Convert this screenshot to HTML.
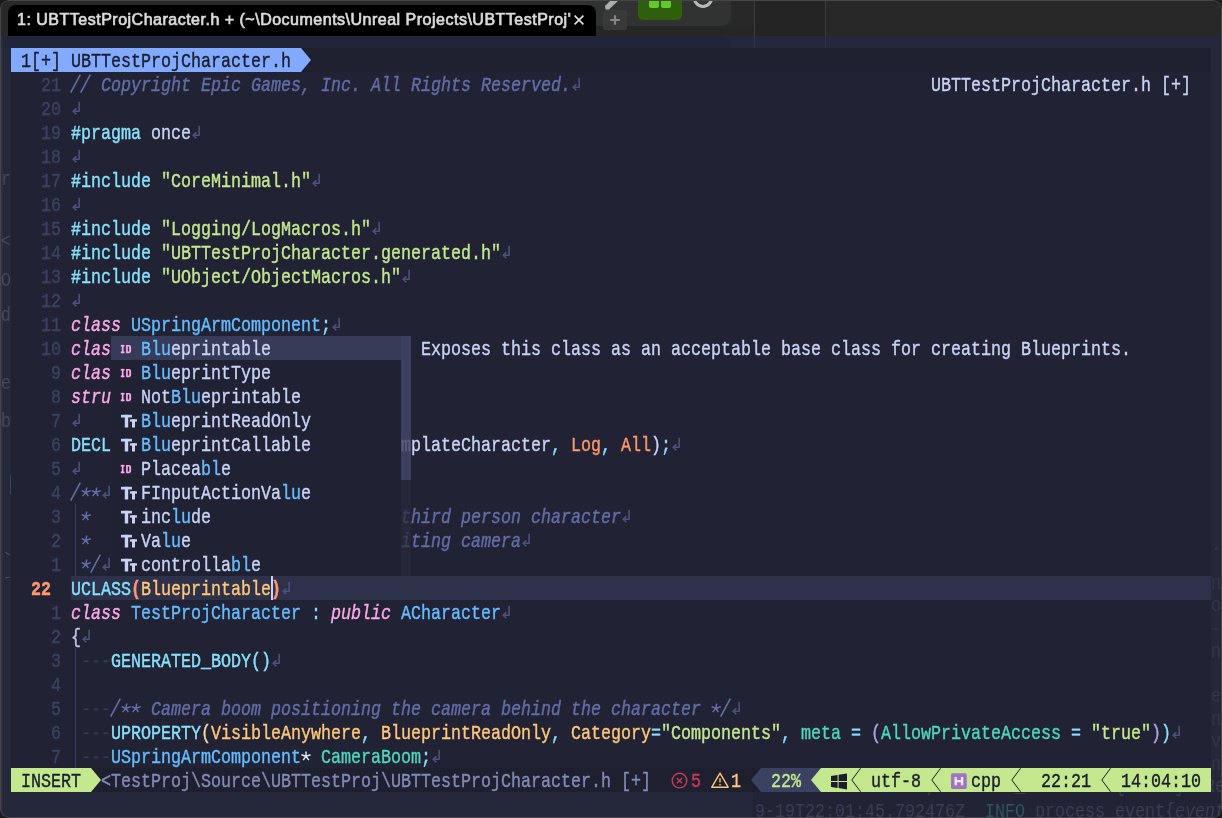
<!DOCTYPE html>
<html><head><meta charset="utf-8"><title>nvim</title><style>
html,body{margin:0;padding:0}
body{width:1222px;height:818px;background:#1b1b1b;overflow:hidden;position:relative;font-family:"Liberation Sans",sans-serif}
#win{position:absolute;left:0;top:0;width:1222px;height:818px;border-radius:9px;overflow:hidden;background:#282828}
#bord{position:absolute;left:0;top:0;width:1220px;height:816px;border-radius:9px;border:1px solid #464646;pointer-events:none}
#term{position:absolute;left:0;top:36px;width:1222px;height:782px;background:#25283a;overflow:hidden}
#grid{position:absolute;left:11px;top:12px;width:1200px;height:744px;background:#212335;overflow:hidden}
.t{position:absolute;white-space:pre;font:21.0px/24px "Liberation Mono",monospace;transform:scaleX(0.79352);transform-origin:0 0;height:24px;padding-top:2.2px;box-sizing:border-box;-webkit-text-stroke:0.42px currentColor}
.t.it{font-style:italic}
.t.b{font-weight:bold}
.i{position:absolute;overflow:visible}
#txt{position:absolute;left:0;top:0;width:1200px;height:744px;will-change:transform}
#tab{position:absolute;left:8px;top:5px;width:588px;height:31px;background:#000;border-radius:8px 8px 0 0}
#tabt{position:absolute;left:8.5px;top:0;height:31px;font:16px/30px "Liberation Sans",sans-serif;color:#dadada;white-space:pre;letter-spacing:0.5px;-webkit-text-stroke:0.7px currentColor;will-change:transform}
#plus{position:absolute;left:603px;top:10px;width:24px;height:20px;background:#393939;border-radius:2px}
.g{position:absolute;white-space:pre;font:21.0px/24px "Liberation Mono",monospace;transform:scaleX(0.79352);transform-origin:0 0;height:24px;padding-top:2.2px;box-sizing:border-box;color:#3a3e56;will-change:transform}
.ghost{position:absolute;white-space:pre;font:21.0px/24px "Liberation Mono",monospace;transform:scaleX(0.79352);transform-origin:0 0;color:#3c4058}
</style></head>
<body>
<div id="win">
<div style="position:absolute;left:560px;top:-10px;width:171px;height:36px;background:#313232;border-radius:9px"></div>
<div style="position:absolute;left:596px;top:26px;width:158px;height:10px;background:#252727"></div>
<div style="position:absolute;left:638px;top:-6px;width:44px;height:26px;background:#2f5f0c;border-radius:5px"></div>
<div style="position:absolute;left:649px;top:-4px;width:10px;height:12px;background:#63c926;border-radius:2px"></div>
<div style="position:absolute;left:661px;top:-4px;width:10px;height:12px;background:#63c926;border-radius:2px"></div>
<div style="position:absolute;left:692px;top:-18px;width:16px;height:20px;border:3.5px solid #b9b9b9;border-radius:50%"></div>
<svg class="i" style="left:603px;top:0" width="22" height="10" viewBox="0 0 22 10"><path d="M2.5 9.5L2 6L9 -1H17L6 9.5Z" fill="#a9aeb6"/></svg>
<div style="position:absolute;left:754px;top:0;width:1px;height:36px;background:#3c3c3c"></div>
<div style="position:absolute;left:825px;top:0;width:1px;height:36px;background:#3c3c3c"></div>
<div style="position:absolute;left:755px;top:1px;width:70px;height:35px;background:#242424"></div>

<div id="tab"><div id="tabt">1: UBTTestProjCharacter.h + (~\Documents\Unreal Projects\UBTTestProj'</div>
<svg class="i" style="left:566.4px;top:10.2px" width="10" height="10" viewBox="0 0 10 10"><path d="M0.6 0.6L9.4 9.4M9.4 0.6L0.6 9.4" stroke="#e2e2e2" stroke-width="1.6" fill="none"/></svg></div>
<div id="plus"><svg class="i" style="left:7px;top:5px" width="10" height="10" viewBox="0 0 10 10"><path d="M5 0.2V9.8M0.2 5H9.8" stroke="#868686" stroke-width="2.2" fill="none"/></svg></div>
<div id="term">
<div style="position:absolute;left:753px;top:756px;width:469px;height:26px;background:rgba(10,10,20,0.10)"></div>
<span class="g" style="left:755px;top:762px">9-19T22:01:45.792476Z  <span style="color:#2d5561">INFO</span> process_event{<i>event_id</i></span>
<span class="g" style="left:755px;top:737px">.nd 'mind' 1857ZU; 'CUSTOM_Container{idx 3}: Reme</span>
<span class="g" style="left:1211px;top:534px;color:#33374d">n</span>
<span class="g" style="left:1211px;top:556px;color:#33374d">o</span>
<span class="g" style="left:1211px;top:580px;color:#33374d">-f</span>
<span class="g" style="left:1211px;top:602px;color:#33374d">n</span>
<span class="g" style="left:1211px;top:647px;color:#33374d">e</span>
<span class="g" style="left:1211px;top:670px;color:#33374d">n</span>
<span class="g" style="left:1211px;top:692px;color:#33374d">v</span>
<span class="g" style="left:1211px;top:715px;color:#33374d">n</span>
<span class="g" style="left:1211px;top:495px;color:#33374d">.c</span>
<span class="g" style="left:-9px;top:130px;color:#45485c">cr</span>
<span class="g" style="left:-9px;top:192px;color:#45485c">&lt;&lt;</span>
<span class="g" style="left:-9px;top:231px;color:#45485c">OO</span>
<span class="g" style="left:-9px;top:266px;color:#45485c">od'</span>
<span class="g" style="left:-9px;top:334px;color:#45485c">re</span>
<span class="g" style="left:-9px;top:372px;color:#45485c">ab</span>
<div style="position:absolute;left:9.5px;top:439px;width:1.2px;height:19px;background:#2d4a63"></div>
<div style="position:absolute;left:5px;top:517px;width:5px;height:1.2px;background:#4b4e62;transform:rotate(30deg)"></div>
<div style="position:absolute;left:5px;top:541px;width:5px;height:1.2px;background:#4b4e62;transform:rotate(-10deg)"></div>
<div style="position:absolute;left:0;top:0;width:3px;height:782px;background:rgba(120,120,110,0.10)"></div>
<div style="position:absolute;left:0;top:0;width:731px;height:12px;background:rgba(0,0,10,0.06);border-radius:0 9px 0 0"></div>
<div style="position:absolute;left:754px;top:0;width:1px;height:12px;background:#30334a"></div>
<div style="position:absolute;left:825px;top:0;width:1px;height:12px;background:#30334a"></div>

<div id="grid">
<div style="position:absolute;left:0px;top:0px;width:1200px;height:24px;background:#1e2030;"></div>
<div style="position:absolute;left:0px;top:0px;width:290px;height:24px;background:#82aaff;"></div>
<svg class="i" style="left:290px;top:0" width="10" height="24" viewBox="0 0 10 24"><path d="M0 0L10 12L0 24Z" fill="#82aaff"/></svg>
<div style="position:absolute;left:60px;top:528px;width:1140px;height:24px;background:#2d314a;"></div>
<div style="position:absolute;left:100px;top:288px;width:300px;height:240px;background:#202234;"></div>
<div style="position:absolute;left:100px;top:288px;width:300px;height:24px;background:#363b57;"></div>
<div style="position:absolute;left:390px;top:288px;width:10px;height:144px;background:#3b4060;"></div>
<div style="position:absolute;left:390px;top:432px;width:10px;height:96px;background:#26283a;"></div>
<div style="position:absolute;left:260.2px;top:528px;width:1.8px;height:24px;background:#c8d3f5;"></div>
<div style="position:absolute;left:64.1px;top:456px;width:1.1px;height:72px;background:#3a4062;"></div>
<div style="position:absolute;left:64.1px;top:600px;width:1.1px;height:120px;background:#3a4062;"></div>
<div style="position:absolute;left:0px;top:720px;width:1200px;height:24px;background:#1e2030;"></div>
<div style="position:absolute;left:0px;top:720px;width:80px;height:24px;background:#c3e88d;"></div>
<svg class="i" style="left:80px;top:720px" width="10" height="24" viewBox="0 0 10 24"><path d="M0 0L10 12L0 24Z" fill="#c3e88d"/></svg>
<svg class="i" style="left:659px;top:720px" width="20" height="24" viewBox="0 0 20 24"><g fill="none" stroke="#c53b53" stroke-width="1.4"><circle cx="9.5" cy="12.6" r="7.3"/><path d="M6.9 10L12.1 15.2M12.1 10L6.9 15.2"/></g></svg>
<svg class="i" style="left:699px;top:720px" width="22" height="24" viewBox="0 0 22 24"><g fill="none" stroke="#ffc777" stroke-width="1.4" stroke-linejoin="round"><path d="M10 5.2L18.2 19.2H1.8Z"/><path d="M10 10.2V14.6M10 16V17.6"/></g></svg>
<svg class="i" style="left:740px;top:720px" width="10" height="24" viewBox="0 0 10 24"><path d="M10 0L0 12L10 24Z" fill="#3b4261"/></svg>
<div style="position:absolute;left:750px;top:720px;width:60px;height:24px;background:#3b4261;"></div>
<svg class="i" style="left:800px;top:720px" width="10" height="24" viewBox="0 0 10 24"><path d="M10 0L0 12L10 24Z" fill="#c3e88d"/></svg>
<div style="position:absolute;left:810px;top:720px;width:390px;height:24px;background:#c3e88d;"></div>
<svg class="i" style="left:820px;top:720px" width="17" height="24" viewBox="0 0 17 24"><path transform="translate(0 1.3)" d="M0 6.6L6.6 5.6V11.6H0ZM7.6 5.4L16 4.1V11.6H7.6ZM0 12.6H6.6V18.6L0 17.6ZM7.6 12.6H16V20.1L7.6 18.8Z" fill="#1b1d2b"/></svg>
<svg class="i" style="left:840px;top:720px" width="10" height="24" viewBox="0 0 10 24"><path d="M9.6 0.3L0.8 12L9.6 23.7" fill="none" stroke="#1b1d2b" stroke-width="1.0"/></svg>
<svg class="i" style="left:920px;top:720px" width="10" height="24" viewBox="0 0 10 24"><path d="M9.6 0.3L0.8 12L9.6 23.7" fill="none" stroke="#1b1d2b" stroke-width="1.0"/></svg>
<svg class="i" style="left:940px;top:720px" width="16" height="24" viewBox="0 0 16 24"><rect x="0" y="5.2" width="15.8" height="15.8" rx="1.8" fill="#a074c4"/><path d="M4.7 8.9V17.3M11.1 8.9V17.3M4.7 13.1H11.1" stroke="#efe8f8" stroke-width="2.3" fill="none"/></svg>
<svg class="i" style="left:1000px;top:720px" width="10" height="24" viewBox="0 0 10 24"><path d="M9.6 0.3L0.8 12L9.6 23.7" fill="none" stroke="#1b1d2b" stroke-width="1.0"/></svg>
<svg class="i" style="left:1090px;top:720px" width="10" height="24" viewBox="0 0 10 24"><path d="M9.6 0.3L0.8 12L9.6 23.7" fill="none" stroke="#1b1d2b" stroke-width="1.0"/></svg>
<div id="txt">
<span class="t " style="left:30px;top:24px;color:#3b4261">21</span>
<svg class="i" style="left:60px;top:24px" width="10" height="24" viewBox="0 0 10 24"><path d="M-0.3 20.6L9.3 2.6" fill="none" stroke="#636da6" stroke-width="1.6"/></svg>
<svg class="i" style="left:70px;top:24px" width="10" height="24" viewBox="0 0 10 24"><path d="M-0.3 20.6L9.3 2.6" fill="none" stroke="#636da6" stroke-width="1.6"/></svg>
<span class="t it" style="left:60px;top:24px;color:#636da6">   Copyright Epic Games, Inc. All Rights Reserved.</span>
<svg class="i" style="left:560px;top:24px" width="10" height="24" viewBox="0 0 10 24"><path d="M8.1 5.7V15.3H2.4M5.3 12.4L2.2 15.3L5.3 18.3" fill="none" stroke="#4b5179" stroke-width="1.6"/></svg>
<span class="t " style="left:30px;top:48px;color:#3b4261">20</span>
<svg class="i" style="left:60px;top:48px" width="10" height="24" viewBox="0 0 10 24"><path d="M8.1 5.7V15.3H2.4M5.3 12.4L2.2 15.3L5.3 18.3" fill="none" stroke="#4b5179" stroke-width="1.6"/></svg>
<span class="t " style="left:30px;top:72px;color:#3b4261">19</span>
<span class="t " style="left:60px;top:72px;color:#86e1fc">#pragma</span>
<span class="t " style="left:140px;top:72px;color:#c8d3f5">once</span>
<svg class="i" style="left:180px;top:72px" width="10" height="24" viewBox="0 0 10 24"><path d="M8.1 5.7V15.3H2.4M5.3 12.4L2.2 15.3L5.3 18.3" fill="none" stroke="#4b5179" stroke-width="1.6"/></svg>
<span class="t " style="left:30px;top:96px;color:#3b4261">18</span>
<svg class="i" style="left:60px;top:96px" width="10" height="24" viewBox="0 0 10 24"><path d="M8.1 5.7V15.3H2.4M5.3 12.4L2.2 15.3L5.3 18.3" fill="none" stroke="#4b5179" stroke-width="1.6"/></svg>
<span class="t " style="left:30px;top:120px;color:#3b4261">17</span>
<span class="t " style="left:60px;top:120px;color:#86e1fc">#include</span>
<span class="t " style="left:150px;top:120px;color:#c3e88d">&quot;CoreMinimal.h&quot;</span>
<svg class="i" style="left:300px;top:120px" width="10" height="24" viewBox="0 0 10 24"><path d="M8.1 5.7V15.3H2.4M5.3 12.4L2.2 15.3L5.3 18.3" fill="none" stroke="#4b5179" stroke-width="1.6"/></svg>
<span class="t " style="left:30px;top:144px;color:#3b4261">16</span>
<svg class="i" style="left:60px;top:144px" width="10" height="24" viewBox="0 0 10 24"><path d="M8.1 5.7V15.3H2.4M5.3 12.4L2.2 15.3L5.3 18.3" fill="none" stroke="#4b5179" stroke-width="1.6"/></svg>
<span class="t " style="left:30px;top:168px;color:#3b4261">15</span>
<span class="t " style="left:60px;top:168px;color:#86e1fc">#include</span>
<span class="t " style="left:150px;top:168px;color:#c3e88d">&quot;Logging/LogMacros.h&quot;</span>
<svg class="i" style="left:360px;top:168px" width="10" height="24" viewBox="0 0 10 24"><path d="M8.1 5.7V15.3H2.4M5.3 12.4L2.2 15.3L5.3 18.3" fill="none" stroke="#4b5179" stroke-width="1.6"/></svg>
<span class="t " style="left:30px;top:192px;color:#3b4261">14</span>
<span class="t " style="left:60px;top:192px;color:#86e1fc">#include</span>
<span class="t " style="left:150px;top:192px;color:#c3e88d">&quot;UBTTestProjCharacter.generated.h&quot;</span>
<svg class="i" style="left:490px;top:192px" width="10" height="24" viewBox="0 0 10 24"><path d="M8.1 5.7V15.3H2.4M5.3 12.4L2.2 15.3L5.3 18.3" fill="none" stroke="#4b5179" stroke-width="1.6"/></svg>
<span class="t " style="left:30px;top:216px;color:#3b4261">13</span>
<span class="t " style="left:60px;top:216px;color:#86e1fc">#include</span>
<span class="t " style="left:150px;top:216px;color:#c3e88d">&quot;UObject/ObjectMacros.h&quot;</span>
<svg class="i" style="left:390px;top:216px" width="10" height="24" viewBox="0 0 10 24"><path d="M8.1 5.7V15.3H2.4M5.3 12.4L2.2 15.3L5.3 18.3" fill="none" stroke="#4b5179" stroke-width="1.6"/></svg>
<span class="t " style="left:30px;top:240px;color:#3b4261">12</span>
<svg class="i" style="left:60px;top:240px" width="10" height="24" viewBox="0 0 10 24"><path d="M8.1 5.7V15.3H2.4M5.3 12.4L2.2 15.3L5.3 18.3" fill="none" stroke="#4b5179" stroke-width="1.6"/></svg>
<span class="t " style="left:30px;top:264px;color:#3b4261">11</span>
<span class="t it" style="left:60px;top:264px;color:#fca7ea">class</span>
<span class="t " style="left:120px;top:264px;color:#65bcff">USpringArmComponent</span>
<span class="t " style="left:310px;top:264px;color:#89ddff">;</span>
<svg class="i" style="left:320px;top:264px" width="10" height="24" viewBox="0 0 10 24"><path d="M8.1 5.7V15.3H2.4M5.3 12.4L2.2 15.3L5.3 18.3" fill="none" stroke="#4b5179" stroke-width="1.6"/></svg>
<span class="t " style="left:30px;top:288px;color:#3b4261">10</span>
<span class="t it" style="left:60px;top:288px;color:#fca7ea">clas</span>
<span class="t " style="left:40px;top:312px;color:#3b4261">9</span>
<span class="t it" style="left:60px;top:312px;color:#fca7ea">clas</span>
<span class="t " style="left:40px;top:336px;color:#3b4261">8</span>
<span class="t it" style="left:60px;top:336px;color:#fca7ea">stru</span>
<span class="t " style="left:40px;top:360px;color:#3b4261">7</span>
<svg class="i" style="left:60px;top:360px" width="10" height="24" viewBox="0 0 10 24"><path d="M8.1 5.7V15.3H2.4M5.3 12.4L2.2 15.3L5.3 18.3" fill="none" stroke="#4b5179" stroke-width="1.6"/></svg>
<span class="t " style="left:40px;top:384px;color:#3b4261">6</span>
<span class="t " style="left:60px;top:384px;color:#86e1fc">DECL</span>
<span class="t " style="left:40px;top:408px;color:#3b4261">5</span>
<svg class="i" style="left:60px;top:408px" width="10" height="24" viewBox="0 0 10 24"><path d="M8.1 5.7V15.3H2.4M5.3 12.4L2.2 15.3L5.3 18.3" fill="none" stroke="#4b5179" stroke-width="1.6"/></svg>
<span class="t " style="left:40px;top:432px;color:#3b4261">4</span>
<svg class="i" style="left:60px;top:432px" width="10" height="24" viewBox="0 0 10 24"><path d="M-0.3 20.6L9.3 2.6" fill="none" stroke="#636da6" stroke-width="1.6"/></svg>
<svg class="i" style="left:70px;top:432px" width="10" height="24" viewBox="0 0 10 24"><path d="M5.00 12.20L5.00 7.40M5.00 12.20L9.57 10.72M5.00 12.20L7.82 16.08M5.00 12.20L2.18 16.08M5.00 12.20L0.43 10.72" fill="none" stroke="#636da6" stroke-width="1.5" transform="skewX(-8) translate(1.7 0)"/></svg>
<svg class="i" style="left:80px;top:432px" width="10" height="24" viewBox="0 0 10 24"><path d="M5.00 12.20L5.00 7.40M5.00 12.20L9.57 10.72M5.00 12.20L7.82 16.08M5.00 12.20L2.18 16.08M5.00 12.20L0.43 10.72" fill="none" stroke="#636da6" stroke-width="1.5" transform="skewX(-8) translate(1.7 0)"/></svg>
<svg class="i" style="left:90px;top:432px" width="10" height="24" viewBox="0 0 10 24"><path d="M8.1 5.7V15.3H2.4M5.3 12.4L2.2 15.3L5.3 18.3" fill="none" stroke="#4b5179" stroke-width="1.6"/></svg>
<span class="t " style="left:40px;top:456px;color:#3b4261">3</span>
<svg class="i" style="left:70px;top:456px" width="10" height="24" viewBox="0 0 10 24"><path d="M5.00 12.20L5.00 7.40M5.00 12.20L9.57 10.72M5.00 12.20L7.82 16.08M5.00 12.20L2.18 16.08M5.00 12.20L0.43 10.72" fill="none" stroke="#636da6" stroke-width="1.5" transform="skewX(-8) translate(1.7 0)"/></svg>
<span class="t " style="left:40px;top:480px;color:#3b4261">2</span>
<svg class="i" style="left:70px;top:480px" width="10" height="24" viewBox="0 0 10 24"><path d="M5.00 12.20L5.00 7.40M5.00 12.20L9.57 10.72M5.00 12.20L7.82 16.08M5.00 12.20L2.18 16.08M5.00 12.20L0.43 10.72" fill="none" stroke="#636da6" stroke-width="1.5" transform="skewX(-8) translate(1.7 0)"/></svg>
<span class="t " style="left:40px;top:504px;color:#3b4261">1</span>
<svg class="i" style="left:70px;top:504px" width="10" height="24" viewBox="0 0 10 24"><path d="M5.00 12.20L5.00 7.40M5.00 12.20L9.57 10.72M5.00 12.20L7.82 16.08M5.00 12.20L2.18 16.08M5.00 12.20L0.43 10.72" fill="none" stroke="#636da6" stroke-width="1.5" transform="skewX(-8) translate(1.7 0)"/></svg>
<svg class="i" style="left:80px;top:504px" width="10" height="24" viewBox="0 0 10 24"><path d="M-0.3 20.6L9.3 2.6" fill="none" stroke="#636da6" stroke-width="1.6"/></svg>
<svg class="i" style="left:90px;top:504px" width="10" height="24" viewBox="0 0 10 24"><path d="M8.1 5.7V15.3H2.4M5.3 12.4L2.2 15.3L5.3 18.3" fill="none" stroke="#4b5179" stroke-width="1.6"/></svg>
<span class="t b" style="left:20px;top:528px;color:#ff966c">22</span>
<span class="t " style="left:60px;top:528px;color:#86e1fc">UCLASS</span>
<span class="t b" style="left:120px;top:528px;color:#ff966c">(</span>
<span class="t " style="left:130px;top:528px;color:#ffc777">Blueprintable</span>
<span class="t b" style="left:260px;top:528px;color:#ff966c">)</span>
<svg class="i" style="left:270px;top:528px" width="10" height="24" viewBox="0 0 10 24"><path d="M8.1 5.7V15.3H2.4M5.3 12.4L2.2 15.3L5.3 18.3" fill="none" stroke="#4b5179" stroke-width="1.6"/></svg>
<span class="t " style="left:40px;top:552px;color:#3b4261">1</span>
<span class="t it" style="left:60px;top:552px;color:#fca7ea">class</span>
<span class="t " style="left:120px;top:552px;color:#65bcff">TestProjCharacter</span>
<span class="t " style="left:300px;top:552px;color:#89ddff">:</span>
<span class="t it" style="left:320px;top:552px;color:#fca7ea">public</span>
<span class="t " style="left:390px;top:552px;color:#65bcff">ACharacter</span>
<svg class="i" style="left:490px;top:552px" width="10" height="24" viewBox="0 0 10 24"><path d="M8.1 5.7V15.3H2.4M5.3 12.4L2.2 15.3L5.3 18.3" fill="none" stroke="#4b5179" stroke-width="1.6"/></svg>
<span class="t " style="left:40px;top:576px;color:#3b4261">2</span>
<span class="t " style="left:60px;top:576px;color:#c8c0ea">{</span>
<svg class="i" style="left:70px;top:576px" width="10" height="24" viewBox="0 0 10 24"><path d="M8.1 5.7V15.3H2.4M5.3 12.4L2.2 15.3L5.3 18.3" fill="none" stroke="#4b5179" stroke-width="1.6"/></svg>
<span class="t " style="left:40px;top:600px;color:#3b4261">3</span>
<span class="t " style="left:70px;top:600px;color:#343955">---</span>
<span class="t " style="left:100px;top:600px;color:#86e1fc">GENERATED_BODY</span>
<span class="t " style="left:240px;top:600px;color:#86e1fc">()</span>
<svg class="i" style="left:260px;top:600px" width="10" height="24" viewBox="0 0 10 24"><path d="M8.1 5.7V15.3H2.4M5.3 12.4L2.2 15.3L5.3 18.3" fill="none" stroke="#4b5179" stroke-width="1.6"/></svg>
<span class="t " style="left:40px;top:624px;color:#3b4261">4</span>
<span class="t " style="left:40px;top:648px;color:#3b4261">5</span>
<span class="t " style="left:70px;top:648px;color:#343955">---</span>
<svg class="i" style="left:100px;top:648px" width="10" height="24" viewBox="0 0 10 24"><path d="M-0.3 20.6L9.3 2.6" fill="none" stroke="#636da6" stroke-width="1.6"/></svg>
<svg class="i" style="left:110px;top:648px" width="10" height="24" viewBox="0 0 10 24"><path d="M5.00 12.20L5.00 7.40M5.00 12.20L9.57 10.72M5.00 12.20L7.82 16.08M5.00 12.20L2.18 16.08M5.00 12.20L0.43 10.72" fill="none" stroke="#636da6" stroke-width="1.5" transform="skewX(-8) translate(1.7 0)"/></svg>
<svg class="i" style="left:120px;top:648px" width="10" height="24" viewBox="0 0 10 24"><path d="M5.00 12.20L5.00 7.40M5.00 12.20L9.57 10.72M5.00 12.20L7.82 16.08M5.00 12.20L2.18 16.08M5.00 12.20L0.43 10.72" fill="none" stroke="#636da6" stroke-width="1.5" transform="skewX(-8) translate(1.7 0)"/></svg>
<svg class="i" style="left:700px;top:648px" width="10" height="24" viewBox="0 0 10 24"><path d="M5.00 12.20L5.00 7.40M5.00 12.20L9.57 10.72M5.00 12.20L7.82 16.08M5.00 12.20L2.18 16.08M5.00 12.20L0.43 10.72" fill="none" stroke="#636da6" stroke-width="1.5" transform="skewX(-8) translate(1.7 0)"/></svg>
<svg class="i" style="left:710px;top:648px" width="10" height="24" viewBox="0 0 10 24"><path d="M-0.3 20.6L9.3 2.6" fill="none" stroke="#636da6" stroke-width="1.6"/></svg>
<span class="t it" style="left:100px;top:648px;color:#636da6">    Camera boom positioning the camera behind the character   </span>
<svg class="i" style="left:720px;top:648px" width="10" height="24" viewBox="0 0 10 24"><path d="M8.1 5.7V15.3H2.4M5.3 12.4L2.2 15.3L5.3 18.3" fill="none" stroke="#4b5179" stroke-width="1.6"/></svg>
<span class="t " style="left:40px;top:672px;color:#3b4261">6</span>
<span class="t " style="left:70px;top:672px;color:#343955">---</span>
<span class="t " style="left:100px;top:672px;color:#86e1fc">UPROPERTY</span>
<span class="t " style="left:190px;top:672px;color:#f0d8a0">(</span>
<span class="t " style="left:200px;top:672px;color:#ffc777">VisibleAnywhere</span>
<span class="t " style="left:350px;top:672px;color:#89ddff">,</span>
<span class="t " style="left:370px;top:672px;color:#ffc777">BlueprintReadOnly</span>
<span class="t " style="left:540px;top:672px;color:#89ddff">,</span>
<span class="t " style="left:560px;top:672px;color:#ffc777">Category</span>
<span class="t " style="left:640px;top:672px;color:#89ddff">=</span>
<span class="t " style="left:650px;top:672px;color:#c3e88d">&quot;Components&quot;</span>
<span class="t " style="left:770px;top:672px;color:#89ddff">,</span>
<span class="t " style="left:790px;top:672px;color:#4fd6be">meta</span>
<span class="t " style="left:840px;top:672px;color:#89ddff">=</span>
<span class="t " style="left:860px;top:672px;color:#a9a4e4">(</span>
<span class="t " style="left:870px;top:672px;color:#4fd6be">AllowPrivateAccess</span>
<span class="t " style="left:1060px;top:672px;color:#89ddff">=</span>
<span class="t " style="left:1080px;top:672px;color:#c3e88d">&quot;true&quot;</span>
<span class="t " style="left:1140px;top:672px;color:#a9a4e4">)</span>
<span class="t " style="left:1150px;top:672px;color:#89ddff">)</span>
<svg class="i" style="left:1160px;top:672px" width="10" height="24" viewBox="0 0 10 24"><path d="M8.1 5.7V15.3H2.4M5.3 12.4L2.2 15.3L5.3 18.3" fill="none" stroke="#4b5179" stroke-width="1.6"/></svg>
<span class="t " style="left:40px;top:696px;color:#3b4261">7</span>
<span class="t " style="left:70px;top:696px;color:#343955">---</span>
<span class="t " style="left:100px;top:696px;color:#65bcff">USpringArmComponent</span>
<svg class="i" style="left:290px;top:696px" width="10" height="24" viewBox="0 0 10 24"><path d="M5.00 12.20L5.00 7.40M5.00 12.20L9.57 10.72M5.00 12.20L7.82 16.08M5.00 12.20L2.18 16.08M5.00 12.20L0.43 10.72" fill="none" stroke="#d4e4fa" stroke-width="1.5"/></svg>
<span class="t " style="left:310px;top:696px;color:#4fd6be">CameraBoom</span>
<span class="t " style="left:410px;top:696px;color:#89ddff">;</span>
<svg class="i" style="left:420px;top:696px" width="10" height="24" viewBox="0 0 10 24"><path d="M8.1 5.7V15.3H2.4M5.3 12.4L2.2 15.3L5.3 18.3" fill="none" stroke="#4b5179" stroke-width="1.6"/></svg>
<span class="t " style="left:390px;top:384px;color:#5a5f7e">m</span>
<span class="t " style="left:400px;top:384px;color:#c8d3f5">plateCharacter</span>
<span class="t " style="left:540px;top:384px;color:#89ddff">,</span>
<span class="t " style="left:560px;top:384px;color:#ff966c">Log</span>
<span class="t " style="left:590px;top:384px;color:#89ddff">,</span>
<span class="t " style="left:610px;top:384px;color:#ff966c">All</span>
<span class="t " style="left:640px;top:384px;color:#c8d3f5">)</span>
<span class="t " style="left:650px;top:384px;color:#89ddff">;</span>
<svg class="i" style="left:660px;top:384px" width="10" height="24" viewBox="0 0 10 24"><path d="M8.1 5.7V15.3H2.4M5.3 12.4L2.2 15.3L5.3 18.3" fill="none" stroke="#4b5179" stroke-width="1.6"/></svg>
<span class="t it" style="left:390px;top:456px;color:#3a3f5c">t</span>
<span class="t it" style="left:400px;top:456px;color:#636da6">hird person character</span>
<svg class="i" style="left:610px;top:456px" width="10" height="24" viewBox="0 0 10 24"><path d="M8.1 5.7V15.3H2.4M5.3 12.4L2.2 15.3L5.3 18.3" fill="none" stroke="#4b5179" stroke-width="1.6"/></svg>
<span class="t it" style="left:390px;top:480px;color:#3a3f5c">i</span>
<span class="t it" style="left:400px;top:480px;color:#636da6">ting camera</span>
<svg class="i" style="left:510px;top:480px" width="10" height="24" viewBox="0 0 10 24"><path d="M8.1 5.7V15.3H2.4M5.3 12.4L2.2 15.3L5.3 18.3" fill="none" stroke="#4b5179" stroke-width="1.6"/></svg>
<span class="t " style="left:920px;top:24px;color:#c8d3f5">UBTTestProjCharacter.h [+]</span>
<span class="t " style="left:410px;top:288px;color:#c8d3f5">Exposes this class as an acceptable base class for creating Blueprints.</span>
<svg class="i" style="left:110px;top:288px" width="10" height="24" viewBox="0 0 10 24"><g fill="#fca7ea"><rect x="-0.2" y="8.9" width="3.7" height="1.7"/><rect x="-0.2" y="15.5" width="3.7" height="1.7"/><rect x="0.8" y="8.9" width="1.7" height="8.3"/><path fill-rule="evenodd" d="M5.1 8.9H8Q10.1 8.9 10.1 11V15.1Q10.1 17.2 8 17.2H5.1ZM6.8 10.6V15.5H8.2V10.6Z"/></g></svg>
<span class="t " style="left:130px;top:288px;color:#65bcff">Blu</span>
<span class="t " style="left:160px;top:288px;color:#c8d3f5">eprintable</span>
<svg class="i" style="left:110px;top:312px" width="10" height="24" viewBox="0 0 10 24"><g fill="#fca7ea"><rect x="-0.2" y="8.9" width="3.7" height="1.7"/><rect x="-0.2" y="15.5" width="3.7" height="1.7"/><rect x="0.8" y="8.9" width="1.7" height="8.3"/><path fill-rule="evenodd" d="M5.1 8.9H8Q10.1 8.9 10.1 11V15.1Q10.1 17.2 8 17.2H5.1ZM6.8 10.6V15.5H8.2V10.6Z"/></g></svg>
<span class="t " style="left:130px;top:312px;color:#65bcff">Blu</span>
<span class="t " style="left:160px;top:312px;color:#c8d3f5">eprintType</span>
<svg class="i" style="left:110px;top:336px" width="10" height="24" viewBox="0 0 10 24"><g fill="#fca7ea"><rect x="-0.2" y="8.9" width="3.7" height="1.7"/><rect x="-0.2" y="15.5" width="3.7" height="1.7"/><rect x="0.8" y="8.9" width="1.7" height="8.3"/><path fill-rule="evenodd" d="M5.1 8.9H8Q10.1 8.9 10.1 11V15.1Q10.1 17.2 8 17.2H5.1ZM6.8 10.6V15.5H8.2V10.6Z"/></g></svg>
<span class="t " style="left:130px;top:336px;color:#c8d3f5">Not</span>
<span class="t " style="left:160px;top:336px;color:#65bcff">Blu</span>
<span class="t " style="left:190px;top:336px;color:#c8d3f5">eprintable</span>
<svg class="i" style="left:110px;top:360px" width="20" height="24" viewBox="0 0 20 24"><g fill="#c8d3f5"><rect x="0" y="6.8" width="10.9" height="2.7"/><rect x="3.8" y="6.8" width="3.4" height="12.7"/><rect x="8.9" y="11.3" width="7.1" height="2.3"/><rect x="11" y="11.3" width="3" height="8.2"/></g></svg>
<span class="t " style="left:130px;top:360px;color:#65bcff">Blu</span>
<span class="t " style="left:160px;top:360px;color:#c8d3f5">eprintReadOnly</span>
<svg class="i" style="left:110px;top:384px" width="20" height="24" viewBox="0 0 20 24"><g fill="#c8d3f5"><rect x="0" y="6.8" width="10.9" height="2.7"/><rect x="3.8" y="6.8" width="3.4" height="12.7"/><rect x="8.9" y="11.3" width="7.1" height="2.3"/><rect x="11" y="11.3" width="3" height="8.2"/></g></svg>
<span class="t " style="left:130px;top:384px;color:#65bcff">Blu</span>
<span class="t " style="left:160px;top:384px;color:#c8d3f5">eprintCallable</span>
<svg class="i" style="left:110px;top:408px" width="10" height="24" viewBox="0 0 10 24"><g fill="#fca7ea"><rect x="-0.2" y="8.9" width="3.7" height="1.7"/><rect x="-0.2" y="15.5" width="3.7" height="1.7"/><rect x="0.8" y="8.9" width="1.7" height="8.3"/><path fill-rule="evenodd" d="M5.1 8.9H8Q10.1 8.9 10.1 11V15.1Q10.1 17.2 8 17.2H5.1ZM6.8 10.6V15.5H8.2V10.6Z"/></g></svg>
<span class="t " style="left:130px;top:408px;color:#c8d3f5">Placea</span>
<span class="t " style="left:190px;top:408px;color:#65bcff">bl</span>
<span class="t " style="left:210px;top:408px;color:#c8d3f5">e</span>
<svg class="i" style="left:110px;top:432px" width="20" height="24" viewBox="0 0 20 24"><g fill="#c8d3f5"><rect x="0" y="6.8" width="10.9" height="2.7"/><rect x="3.8" y="6.8" width="3.4" height="12.7"/><rect x="8.9" y="11.3" width="7.1" height="2.3"/><rect x="11" y="11.3" width="3" height="8.2"/></g></svg>
<span class="t " style="left:130px;top:432px;color:#c8d3f5">FInputActionVa</span>
<span class="t " style="left:270px;top:432px;color:#65bcff">lu</span>
<span class="t " style="left:290px;top:432px;color:#c8d3f5">e</span>
<svg class="i" style="left:110px;top:456px" width="20" height="24" viewBox="0 0 20 24"><g fill="#c8d3f5"><rect x="0" y="6.8" width="10.9" height="2.7"/><rect x="3.8" y="6.8" width="3.4" height="12.7"/><rect x="8.9" y="11.3" width="7.1" height="2.3"/><rect x="11" y="11.3" width="3" height="8.2"/></g></svg>
<span class="t " style="left:130px;top:456px;color:#c8d3f5">inc</span>
<span class="t " style="left:160px;top:456px;color:#65bcff">lu</span>
<span class="t " style="left:180px;top:456px;color:#c8d3f5">de</span>
<svg class="i" style="left:110px;top:480px" width="20" height="24" viewBox="0 0 20 24"><g fill="#c8d3f5"><rect x="0" y="6.8" width="10.9" height="2.7"/><rect x="3.8" y="6.8" width="3.4" height="12.7"/><rect x="8.9" y="11.3" width="7.1" height="2.3"/><rect x="11" y="11.3" width="3" height="8.2"/></g></svg>
<span class="t " style="left:130px;top:480px;color:#c8d3f5">Va</span>
<span class="t " style="left:150px;top:480px;color:#65bcff">lu</span>
<span class="t " style="left:170px;top:480px;color:#c8d3f5">e</span>
<svg class="i" style="left:110px;top:504px" width="20" height="24" viewBox="0 0 20 24"><g fill="#c8d3f5"><rect x="0" y="6.8" width="10.9" height="2.7"/><rect x="3.8" y="6.8" width="3.4" height="12.7"/><rect x="8.9" y="11.3" width="7.1" height="2.3"/><rect x="11" y="11.3" width="3" height="8.2"/></g></svg>
<span class="t " style="left:130px;top:504px;color:#c8d3f5">controlla</span>
<span class="t " style="left:220px;top:504px;color:#65bcff">bl</span>
<span class="t " style="left:240px;top:504px;color:#c8d3f5">e</span>
<span class="t " style="left:10px;top:0px;color:#1b1d2b">1[+] UBTTestProjCharacter.h</span>
<span class="t " style="left:10px;top:720px;color:#1b1d2b">INSERT</span>
<span class="t " style="left:90px;top:720px;color:#828bb8">&lt;TestProj\Source\UBTTestProj\UBTTestProjCharacter.h [+]</span>
<span class="t " style="left:680px;top:720px;color:#c53b53">5</span>
<span class="t " style="left:720px;top:720px;color:#ffc777">1</span>
<span class="t " style="left:760px;top:720px;color:#c3e88d">22%</span>
<span class="t " style="left:860px;top:720px;color:#1b1d2b">utf-8</span>
<span class="t " style="left:960px;top:720px;color:#1b1d2b">cpp</span>
<span class="t " style="left:1030px;top:720px;color:#1b1d2b">22:21</span>
<span class="t " style="left:1110px;top:720px;color:#1b1d2b">14:04:10</span>
</div>
</div>
</div>
<div id="bord"></div>
</div>
</body></html>
